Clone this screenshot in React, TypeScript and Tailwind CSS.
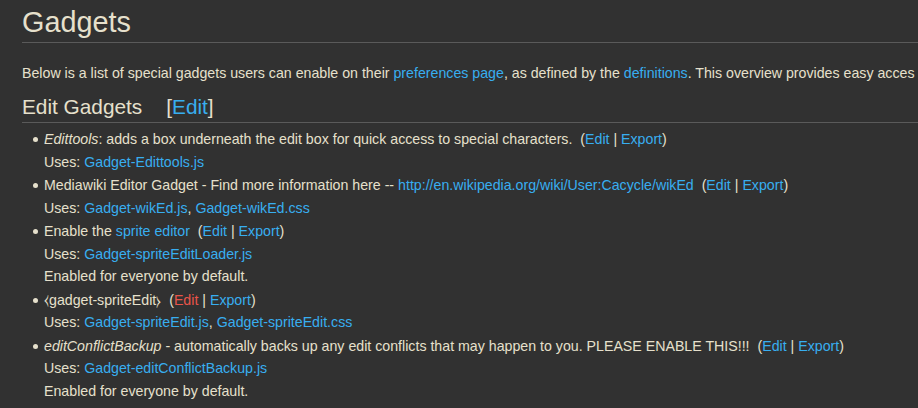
import React from 'react';

const A = ({ children, red }: { children: React.ReactNode; red?: boolean }) => (
  <a href="#" className={red ? 'text-[#e8554a]' : 'text-[#38aef0]'}>
    {children}
  </a>
);

const Actions = ({ red }: { red?: boolean }) => (
  <>
    {'\u00a0 '}(<A red={red}>Edit</A> | <A>Export</A>)
  </>
);

const gadgets = [
  {
    title: (
      <>
        <i>Edittools</i>: adds a box underneath the edit box for quick access to special characters.
        <Actions />
      </>
    ),
    uses: ['Gadget-Edittools.js'],
  },
  {
    title: (
      <>
        Mediawiki Editor Gadget - Find more information here -- <A>http://en.wikipedia.org/wiki/User:Cacycle/wikEd</A>
        <Actions />
      </>
    ),
    uses: ['Gadget-wikEd.js', 'Gadget-wikEd.css'],
  },
  {
    title: (
      <>
        Enable the <A>sprite editor</A>
        <Actions />
      </>
    ),
    uses: ['Gadget-spriteEditLoader.js'],
    byDefault: true,
  },
  {
    title: (
      <>
        <span className="font-['DejaVu_Sans',sans-serif]">⧼</span>gadget-spriteEdit
        <span className="font-['DejaVu_Sans',sans-serif]">⧽</span>
        <Actions red />
      </>
    ),
    uses: ['Gadget-spriteEdit.js', 'Gadget-spriteEdit.css'],
  },
  {
    title: (
      <>
        <i>editConflictBackup</i> - automatically backs up any edit conflicts that may happen to you. PLEASE ENABLE THIS!!!
        <Actions />
      </>
    ),
    uses: ['Gadget-editConflictBackup.js'],
    byDefault: true,
  },
];

export default function App() {
  return (
    <div className="w-[918px] h-[408px] overflow-hidden bg-[#313131] text-[#e6e0cc] font-['Liberation_Sans',Arial,sans-serif]">
      <div className="pl-[22px]">
        {/* Title */}
        <h1 className="pt-[4px] pb-[1px] text-[28.8px] leading-[37px] border-b border-[#5a5a5a] whitespace-nowrap">
          Gadgets
        </h1>
        <p className="mt-[21px] text-[14.2px] leading-[18px] whitespace-nowrap">
          Below is a list of special gadgets users can enable on their <A>preferences page</A>, as defined by the{' '}
          <A>definitions</A>. This overview provides easy acces
        </p>

        {/* Section */}
        <h2 className="mt-[11px] pb-[2px] text-[20.8px] leading-[27px] border-b border-[#5a5a5a] whitespace-nowrap">
          Edit Gadgets
          <span className="ml-[24px]">
            [<A>Edit</A>]
          </span>
        </h2>

        <ul className="mt-[5px] pl-[22px] text-[14.2px] leading-[22.5px]">
          {gadgets.map((g, i) => (
            <li
              key={i}
              className="relative mb-[1px] whitespace-nowrap before:content-[''] before:absolute before:left-[-11px] before:top-[9px] before:w-[5px] before:h-[5px] before:rounded-full before:bg-[#e6e0cc]"
            >
              <div>{g.title}</div>
              <div>
                Uses:{' '}
                {g.uses.map((u, j) => (
                  <React.Fragment key={u}>
                    {j > 0 && ', '}
                    <A>{u}</A>
                  </React.Fragment>
                ))}
              </div>
              {g.byDefault && <div>Enabled for everyone by default.</div>}
            </li>
          ))}
        </ul>
      </div>
    </div>
  );
}
